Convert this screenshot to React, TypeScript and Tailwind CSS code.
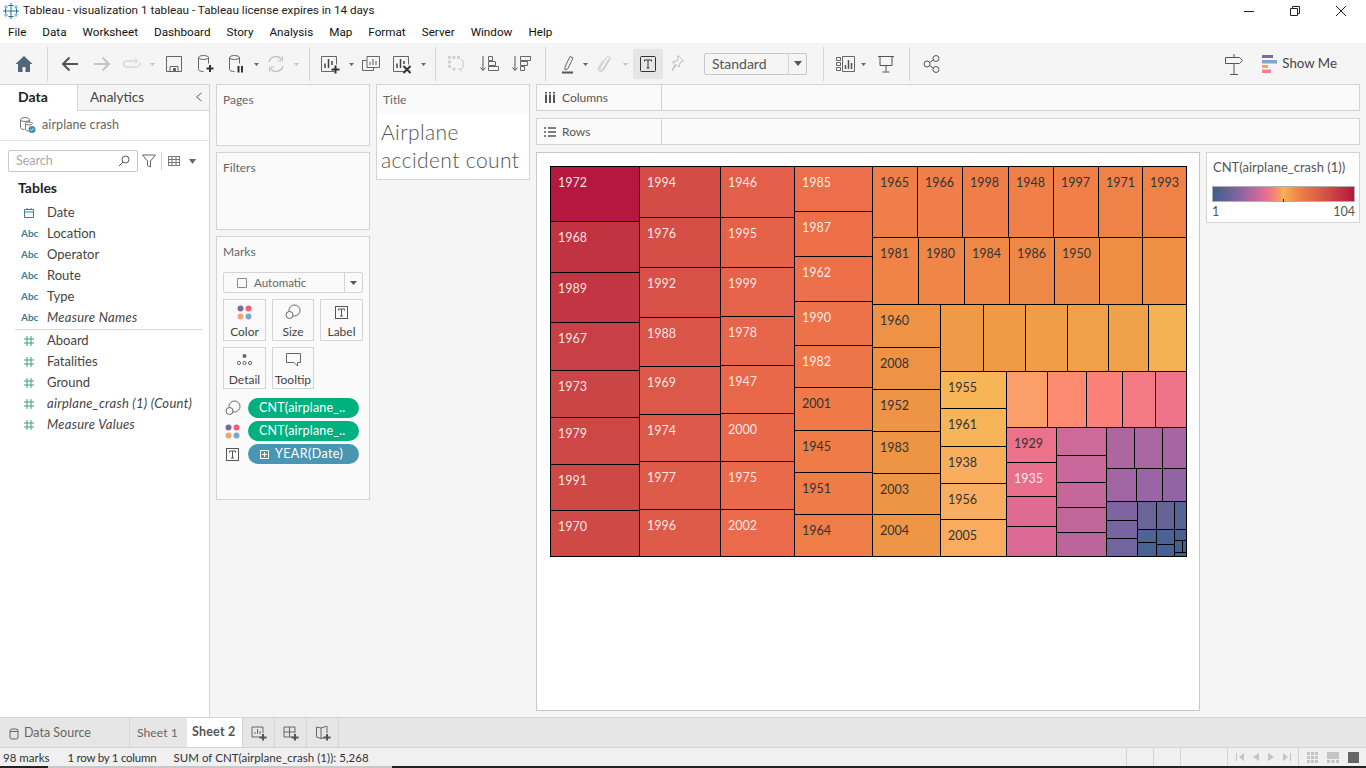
import React from 'react';

type Cell = { x0: number; y0: number; x1: number; y1: number; color: string; label?: string; dark?: boolean };
type Item = [string, string?, boolean?];

// stack cells downward inside one column
const stackV = (x0: number, x1: number, ys: number[], items: Item[]): Cell[] =>
  items.map((it, i) => ({ x0, x1, y0: ys[i], y1: ys[i + 1], color: it[0], label: it[1], dark: it[2] }));

// stack cells sideways inside one row
const stackH = (y0: number, y1: number, xs: number[], items: Item[]): Cell[] =>
  items.map((it, i) => ({ y0, y1, x0: xs[i], x1: xs[i + 1], color: it[0], label: it[1], dark: it[2] }));

const cells: Cell[] = [
  ...stackV(550.5, 639.5, [166.5, 221.5, 272.5, 322.5, 370.5, 417.5, 464.5, 510.5, 556.5], [
    ['#b5173f', '1972'], ['#c23342', '1968'], ['#c33542', '1989'], ['#c83f45', '1967'],
    ['#cc4546', '1973'], ['#cd4746', '1979'], ['#ce4846', '1991'], ['#cf4946', '1970'],
  ]),
  ...stackV(639.5, 720.5, [166.5, 217.5, 267.5, 317.5, 366.5, 414.5, 461.5, 509.5, 556.5], [
    ['#d34c46', '1994'], ['#d64f47', '1976'], ['#d85148', '1992'], ['#da5448', '1988'],
    ['#dc5849', '1969'], ['#dd5949', '1974'], ['#df5b49', '1977'], ['#df5b49', '1996'],
  ]),
  ...stackV(720.5, 794.5, [166.5, 217.5, 267.5, 316.5, 365.5, 413.5, 461.5, 509.5, 556.5], [
    ['#e35f4a', '1946'], ['#e4614a', '1995'], ['#e5634a', '1999'], ['#e7654a', '1978'],
    ['#e9684a', '1947'], ['#e9684a', '2000'], ['#ea694b', '1975'], ['#ea6a4b', '2002'],
  ]),
  ...stackV(794.5, 872.5, [166.5, 211.5, 256.5, 301.5, 345.5, 387.5, 430.5, 472.5, 514.5, 556.5], [
    ['#ec6e4a', '1985'], ['#ec6f4a', '1987'], ['#ed704a', '1962'], ['#ed724a', '1990'], ['#ee7548', '1982'],
    ['#ef7a47', '2001', true], ['#ef7c47', '1945', true], ['#ef7c47', '1951', true], ['#ef7d47', '1964', true],
  ]),
  ...stackH(166.5, 237.5, [872.5, 917.5, 962.5, 1008.5, 1053.5, 1098.5, 1142.5, 1186.5], [
    ['#f07e48', '1965', true], ['#f07e48', '1966', true], ['#f07e48', '1998', true], ['#f08048', '1948', true],
    ['#f08048', '1997', true], ['#ef8247', '1971', true], ['#ef8347', '1993', true],
  ]),
  ...stackH(237.5, 304.5, [872.5, 918.5, 964.5, 1009.5, 1054.5, 1099.5, 1142.5, 1186.5], [
    ['#ef8446', '1981', true], ['#ef8546', '1980', true], ['#ef8746', '1984', true], ['#ee8846', '1986', true],
    ['#ee8a46', '1950', true], ['#ee8e45'], ['#ee9045'],
  ]),
  ...stackV(872.5, 940.5, [304.5, 347.5, 389.5, 431.5, 473.5, 514.5, 556.5], [
    ['#ee9345', '1960', true], ['#ee9345', '2008', true], ['#ee9445', '1952', true],
    ['#ee9445', '1983', true], ['#ee9545', '2003', true], ['#ee9645', '2004', true],
  ]),
  ...stackH(304.5, 371.5, [940.5, 983.5, 1025.5, 1067.5, 1108.5, 1148.5, 1186.5], [
    ['#ef9a46'], ['#ef9b46'], ['#ef9d46'], ['#f0a048'], ['#f0a24a'], ['#f5b253'],
  ]),
  ...stackV(940.5, 1006.5, [371.5, 408.5, 446.5, 483.5, 519.5, 556.5], [
    ['#f7b556', '1955', true], ['#f7b458', '1961', true], ['#f9ae5e', '1938', true],
    ['#f9ad60', '1956', true], ['#f9ac60', '2005', true],
  ]),
  ...stackH(371.5, 427.5, [1006.5, 1047.5, 1086.5, 1122.5, 1155.5, 1186.5], [
    ['#fc9e6a'], ['#fd8b72'], ['#fb8079'], ['#f37a82'], ['#ef7389'],
  ]),
  ...stackV(1006.5, 1056.5, [427.5, 462.5, 496.5, 526.5, 556.5], [
    ['#ec718a', '1929', true], ['#ea6f8c', '1935'], ['#dd6b92'], ['#da6a95'],
  ]),
  ...stackV(1056.5, 1106.5, [427.5, 455.5, 482.5, 507.5, 532.5, 556.5], [
    ['#ce6a9a'], ['#c9699b'], ['#c4679a'], ['#c0669a'], ['#bb659b'],
  ]),
  ...stackH(427.5, 468.5, [1106.5, 1134.5, 1162.5, 1186.5], [['#ad66a0'], ['#a966a1'], ['#a566a3']]),
  ...stackH(468.5, 501.5, [1106.5, 1136.5, 1162.5, 1186.5], [['#a165a3'], ['#9a65a4'], ['#9165a4']]),
  ...stackV(1106.5, 1137.5, [501.5, 520.5, 538.5, 556.5], [['#7e65a2'], ['#7864a0'], ['#72649e']]),
  ...stackV(1137.5, 1156.5, [501.5, 529.5, 542.5, 556.5], [['#6a6499'], ['#4e6494'], ['#486392']]),
  ...stackV(1156.5, 1174.5, [501.5, 529.5, 544.5, 556.5], [['#666497'], ['#4a6393'], ['#456292']]),
  ...stackV(1174.5, 1186.5, [501.5, 529.5, 540.5, 552.5, 556.5], [['#556496'], ['#446292'], ['#416191'], ['#3e6090']]),
  { x0: 1182.5, x1: 1186.5, y0: 540.5, y1: 552.5, color: '#3e6090' },
];

const fields: { kind: string; name: string; italic?: boolean }[] = [
  { kind: 'date', name: 'Date' },
  { kind: 'abc', name: 'Location' },
  { kind: 'abc', name: 'Operator' },
  { kind: 'abc', name: 'Route' },
  { kind: 'abc', name: 'Type' },
  { kind: 'abc', name: 'Measure Names', italic: true },
  { kind: 'line', name: '' },
  { kind: 'num', name: 'Aboard' },
  { kind: 'num', name: 'Fatalities' },
  { kind: 'num', name: 'Ground' },
  { kind: 'num', name: 'airplane_crash (1) (Count)', italic: true },
  { kind: 'num', name: 'Measure Values', italic: true },
];

const Ico: React.FC<{ ml: string; children: React.ReactNode; size?: number }> = ({ ml, children, size = 20 }) => (
  <svg className={`${ml} shrink-0`} width={size} height={20} viewBox={`0 0 ${size} 20`} fill="none" strokeWidth="1" stroke="#666">
    {children}
  </svg>
);

const Caret: React.FC<{ ml: string; dim?: boolean }> = ({ ml, dim }) => (
  <svg className={`${ml} shrink-0`} width="7" height="20" viewBox="0 0 7 20">
    <path d="M1 9h5l-2.5 3z" fill={dim ? '#c4c4c4' : '#666'} />
  </svg>
);

const Sep: React.FC<{ ml: string }> = ({ ml }) => <div className={`${ml} w-px h-[34px] bg-[#d4d4d4] shrink-0`} />;

const SizeGlyph = () => (
  <svg width="16" height="16" viewBox="0 0 16 16" fill="none" stroke="#666">
    <circle cx="9.5" cy="6.5" r="5.5" />
    <circle cx="4.5" cy="11" r="3.5" fill="#fff" />
  </svg>
);

const ColorGlyph = () => (
  <svg width="15" height="15" viewBox="0 0 15 15">
    <circle cx="3.5" cy="3.5" r="3" fill="#7d6a97" />
    <circle cx="11.5" cy="3.5" r="3" fill="#ef5f78" />
    <circle cx="3.5" cy="11.5" r="3" fill="#f2a373" />
    <circle cx="11.5" cy="11.5" r="3" fill="#7fa6cf" />
  </svg>
);

const LabelGlyph = () => (
  <svg width="13" height="13" viewBox="0 0 13 13" fill="none" stroke="#555">
    <rect x="0.5" y="0.5" width="12" height="12" />
    <path d="M3.5 4.500V3h6v1.500M6.500 3v7M5 10h3" />
  </svg>
);

const MarkBtn: React.FC<{ label: string; w: string; children: React.ReactNode }> = ({ label, w, children }) => (
  <div className={`${w} h-[42px] border border-[#d4d4d4] bg-[#fafafa] flex flex-col items-center shrink-0`}>
    <div className="h-[22px] flex items-center justify-center mt-[1px]">{children}</div>
    <span className="text-[12px] leading-[14px] text-[#444] mt-[2px]">{label}</span>
  </div>
);

const Card: React.FC<{ title: string; h: string; children?: React.ReactNode }> = ({ title, h, children }) => (
  <div className={`${h} border border-[#d4d4d4] bg-[#fafafa] shrink-0`}>
    <div className="pl-[6px] pt-[7px] text-[12px] leading-[16px] text-[#666]">{title}</div>
    {children}
  </div>
);

const Pill: React.FC<{ blue?: boolean; glyph: React.ReactNode; children: React.ReactNode }> = ({ blue, glyph, children }) => (
  <div className="flex items-center h-[20px] mb-[3px]">
    <div className="w-[31px] flex justify-center">{glyph}</div>
    <div className={`w-[111px] h-[20px] rounded-full flex items-center text-white text-[12.5px] tracking-[0.2px] ${blue ? 'bg-[#4996b2]' : 'bg-[#00b180]'}`}>
      {children}
    </div>
  </div>
);

const Shelf: React.FC<{ label: string; icon: React.ReactNode }> = ({ label, icon }) => (
  <div className="h-[27px] border border-[#d4d4d4] bg-[#fafafa] flex items-center">
    <div className="w-[125px] h-full border-r border-[#d4d4d4] flex items-center text-[12px] text-[#555]">
      <div className="w-[25px] flex justify-center">{icon}</div>
      {label}
    </div>
  </div>
);

const Treemap = () => (
  <svg width="638" height="392" viewBox="550 166 638 392" className="block" shapeRendering="crispEdges">
    {cells.map((c, i) => (
      <rect key={i} x={c.x0} y={c.y0} width={c.x1 - c.x0} height={c.y1 - c.y0} fill={c.color} stroke="#000" strokeWidth="1" />
    ))}
    {cells.filter((c) => c.label).map((c) => (
      <text
        key={c.label}
        x={c.x0 + 7.5}
        y={c.y0 + 20.7}
        fontSize="12.5"
        fill={c.dark ? '#333' : '#fff'}
        fillOpacity={c.dark ? 1 : 0.88}
        shapeRendering="auto"
      >
        {c.label}
      </text>
    ))}
  </svg>
);

export default function App() {
  return (
    <div className="w-[1366px] h-[768px] overflow-hidden flex flex-col bg-white [font-family:Lato,sans-serif]">
      {/* window title */}
      <div className="h-[22px] flex items-center shrink-0 [font-family:Roboto,sans-serif]">
        <svg className="ml-[2px] mr-[3px]" width="18" height="18" viewBox="0 0 18 18" fill="none" stroke="#2f7ea6" strokeWidth="1">
          <path d="M9 1v16M1 9h16" stroke="#1f6f9c" />
          <path d="M6.500 3.500h5M6.500 14.500h5M3.500 6.500v5M14.500 6.500v5" stroke="#1f6f9c" />
          <path d="M4 3v4M2 5h4M14 3v4M12 5h4M4 11v4M2 13h4M14 11v4M12 13h4" stroke="#7aa7bf" />
        </svg>
        <span className="text-[11.7px] text-[#222]">Tableau - visualization 1 tableau - Tableau license expires in 14 days</span>
        <div className="ml-auto flex items-center">
          <svg width="12" height="12" viewBox="0 0 12 12" stroke="#222" className="mr-[34px]"><path d="M1 6.5h10" /></svg>
          <svg width="12" height="12" viewBox="0 0 12 12" stroke="#222" fill="none" className="mr-[34px]"><path d="M1.5 3.5h7v7h-7zM3.5 3.5v-2h7v7h-2" /></svg>
          <svg width="12" height="12" viewBox="0 0 12 12" stroke="#222" className="mr-[19px]"><path d="M1 1l10 10M11 1L1 11" /></svg>
        </div>
      </div>

      {/* menu */}
      <div className="h-[21px] flex items-center shrink-0 pl-[8px] gap-[16px] text-[11.7px] text-[#111] [font-family:Roboto,sans-serif]">
        <span>File</span><span>Data</span><span>Worksheet</span><span>Dashboard</span><span>Story</span><span>Analysis</span>
        <span>Map</span><span>Format</span><span>Server</span><span>Window</span><span>Help</span>
      </div>

      {/* toolbar */}
      <div className="h-[41px] bg-[#f5f5f5] flex items-center shrink-0">
        <Ico ml="ml-[14px]">
          <path d="M10 2L1.5 10H4v8h4.5v-5h3v5H16v-8h2.5z" fill="#50667a" stroke="none" />
        </Ico>
        <Sep ml="ml-[13px]" />
        <Ico ml="ml-[12px]">
          <path d="M18 10H3M9.5 3.5L3 10l6.5 6.5" stroke="#555" strokeWidth="2" />
        </Ico>
        <Ico ml="ml-[12px]">
          <path d="M2 10h15M10.500 3.500L17 10l-6.500 6.500" stroke="#c4c4c4" strokeWidth="2" />
        </Ico>
        <Ico ml="ml-[10px]">
          <path d="M14 7H4.500a3 3 0 000 6H15a3 3 0 002.500-4.500M13 4.500L15.500 7 13 9.500" stroke="#c8c8c8" />
        </Ico>
        <Caret ml="ml-[7px]" dim />
        <Ico ml="ml-[8px]">
          <path d="M2.500 2.500h15v15h-15zM6 17.500v-5h8v5" stroke="#666" />
          <path d="M9 14h3v3.500H9z" fill="#666" stroke="none" />
        </Ico>
        <Ico ml="ml-[11px]">
          <ellipse cx="8.500" cy="3.500" rx="5" ry="2" stroke="#666" />
          <path d="M3.500 3.500v12c0 1 2 2 5 2M13.500 3.500v6" stroke="#666" />
          <path d="M15 11v7M11.500 14.500h7" stroke="#333" strokeWidth="2" />
        </Ico>
        <Ico ml="ml-[11px]">
          <ellipse cx="8.500" cy="3.500" rx="5" ry="2" stroke="#666" />
          <path d="M3.500 3.500v12c0 1 2 2 5 2M13.500 3.500v6" stroke="#666" />
          <path d="M12.500 12v6.500M16 12v6.500" stroke="#333" strokeWidth="2" />
        </Ico>
        <Caret ml="ml-[7px]" />
        <Ico ml="ml-[6px]">
          <path d="M3 8a7 7 0 0112.500-2.500M17 12a7 7 0 01-12.500 2.500" stroke="#c4c4c4" strokeWidth="1.500" />
          <path d="M16.500 2v5h-5M3.500 18v-5h5" stroke="#c4c4c4" />
        </Ico>
        <Caret ml="ml-[7px]" dim />
        <Sep ml="ml-[9px]" />
        <Ico ml="ml-[10px]">
          <path d="M14 17.500H1.500v-15h15v8" stroke="#666" />
          <path d="M5 14V9.500M8.500 14V5M12 11V7" stroke="#444" strokeWidth="1.500" />
          <path d="M15.500 11.500v8M11.500 15.500h8" stroke="#333" strokeWidth="2" />
        </Ico>
        <Caret ml="ml-[8px]" />
        <Ico ml="ml-[6px]">
          <path d="M5.500 6.500h-4v10h11v-3" stroke="#666" />
          <path d="M6 2.500h12.500v11H6z" stroke="#666" />
          <path d="M9 11V8M12 11V5M15 11V7" stroke="#555" />
        </Ico>
        <Ico ml="ml-[11px]">
          <path d="M12 17.500H1.500v-15h15v8" stroke="#666" />
          <path d="M5 14V9.500M8.500 14V5M12 10V7" stroke="#444" strokeWidth="1.500" />
          <path d="M11.500 12l7 7M18.500 12l-7 7" stroke="#333" strokeWidth="2" />
        </Ico>
        <Caret ml="ml-[8px]" />
        <Sep ml="ml-[8px]" />
        <Ico ml="ml-[10px]">
          <path d="M2.500 2.500h2v2h-2zM7 2.500h2v2H7zM11.500 2.500h2v2h-2zM2.500 7h2v2h-2zM2.500 11.500h2v2h-2zM7 14h2v2H7z" stroke="#c8c8c8" />
          <path d="M17 7v6.500l-3 2.500M12.500 14l1.500 2 1.500 1.500M15 5l2 2" stroke="#c4c4c4" />
        </Ico>
        <Ico ml="ml-[13px]">
          <path d="M4 2v14M1.500 13.500L4 16.500l2.500-3" stroke="#555" />
          <path d="M9.500 2.500h4v4h-4zM9.500 7.500h7v4h-7zM9.500 12.500h10v4h-10z" stroke="#666" />
        </Ico>
        <Ico ml="ml-[12px]">
          <path d="M4 2v14M1.500 13.500L4 16.500l2.500-3" stroke="#555" />
          <path d="M9.500 2.500h10v4h-10zM9.500 7.500h7v4h-7zM9.500 12.500h4v4h-4z" stroke="#666" />
        </Ico>
        <Sep ml="ml-[14px]" />
        <Ico ml="ml-[13px]">
          <path d="M6 13L11 2.500l3 1.500-5 10.500-3 1.500z" stroke="#666" />
          <path d="M3 18.500h11" stroke="#555" strokeWidth="2" />
        </Ico>
        <Caret ml="ml-[3px]" />
        <Ico ml="ml-[6px]">
          <path d="M14 5l-6 10c-1 2-4 1-3-1l6.500-10.500c1.500-2 4.500-.5 3.500 1.500L8.500 16c-2 3-6.500 1-5-2l4.500-8" stroke="#c4c4c4" />
        </Ico>
        <Caret ml="ml-[7px]" dim />
        <div className="ml-[4px] w-[30px] h-[30px] bg-[#e6e6e6] flex items-center justify-center shrink-0">
          <svg width="16" height="16" viewBox="0 0 16 16" fill="none" stroke="#333">
            <rect x="0.500" y="0.500" width="15" height="15" rx="1" />
            <path d="M4.500 5.500v-1.500h7v1.500M8 4v8M6.500 12h3" />
          </svg>
        </div>
        <Ico ml="ml-[4px]">
          <path d="M11 1.500l5.500 5.500-3 1-1.500 5-2.500-2.500L5 17l3-6.500L5.500 8l5-1.500z" stroke="#bdbdbd" />
        </Ico>
        <div className="ml-[17px] w-[103px] h-[22px] border border-[#c8c8c8] rounded-[2px] flex items-center shrink-0">
          <span className="flex-1 pl-[7px] text-[14px] text-[#555]">Standard</span>
          <div className="w-[18px] h-full border-l border-[#d4d4d4] flex items-center justify-center">
            <svg width="8" height="5" viewBox="0 0 8 5"><path d="M0 0h8L4 5z" fill="#555" /></svg>
          </div>
        </div>
        <Sep ml="ml-[16px]" />
        <Ico ml="ml-[11px]">
          <path d="M1.500 3.500h4v3h-4zM1.500 8.500h4v3h-4zM1.500 13.500h4v3h-4zM7.500 2.500h12v15h-12z" stroke="#666" />
          <path d="M10.500 15v-4M13.500 15V6M16.500 15V9" stroke="#555" strokeWidth="1.500" />
        </Ico>
        <Caret ml="ml-[5px]" />
        <Ico ml="ml-[9px]">
          <path d="M2 2.500h16M4 2.500v9h12v-9M10 11.500v6M6.500 18h7" stroke="#555" />
        </Ico>
        <Sep ml="ml-[13px]" />
        <Ico ml="ml-[12px]">
          <circle cx="5" cy="10" r="3" stroke="#555" />
          <circle cx="14" cy="4.500" r="3" stroke="#555" />
          <circle cx="14" cy="15.500" r="3" stroke="#555" />
          <path d="M7.500 8.500l4-2.500M7.500 11.500l4 2.500" stroke="#555" />
        </Ico>
        <div className="ml-auto flex items-center pr-[29px]">
          <svg width="20" height="22" viewBox="0 0 20 22" fill="none" stroke="#555">
            <path d="M10 1v3M10 10v11M6 21.500h8M1.500 4.500h14l3 3-3 3h-14z" />
          </svg>
          <svg className="ml-[18px]" width="16" height="18" viewBox="0 0 16 18">
            <rect x="0" y="0" width="11" height="3" fill="#7d6a97" />
            <rect x="0" y="5" width="15" height="3.500" fill="#7fa6cf" />
            <rect x="0" y="10" width="6" height="3" fill="#f2a373" />
            <rect x="0" y="14.500" width="9" height="3.500" fill="#fb8088" />
          </svg>
          <span className="ml-[4px] text-[13.3px] text-[#444]">Show Me</span>
        </div>
      </div>

      {/* main area */}
      <div className="h-[633px] flex shrink-0 bg-[#f5f5f5]">
        {/* data pane */}
        <div className="w-[210px] bg-white border-r border-[#d4d4d4] shrink-0 border-t">
          <div className="h-[26px] flex">
            <div className="w-[77px] pl-[18px] pb-[3px] flex items-center text-[14px] font-bold text-[#222]">Data</div>
            <div className="flex-1 bg-[#f5f5f5] border-l border-b border-[#d4d4d4] pl-[12px] pb-[1px] flex items-center text-[13.5px] text-[#444]">
              Analytics
              <svg className="ml-auto mr-[6px]" width="8" height="10" viewBox="0 0 8 10" fill="none" stroke="#666"><path d="M6.500 1L1.500 5l5 4" /></svg>
            </div>
          </div>
          <div className="h-[30px] border-b border-[#e6e6e6] pb-[1px] flex items-center pl-[19px]">
            <svg width="18" height="18" viewBox="0 0 18 18" fill="none" stroke="#777">
              <ellipse cx="6" cy="3.500" rx="4.500" ry="2" />
              <path d="M1.500 3.500v8c0 1 2 2 4 2M10.500 3.500v3" />
              <ellipse cx="10" cy="7.500" rx="3.500" ry="1.500" />
              <path d="M6.500 7.500v6c0 1 1 1.500 3 1.500" />
              <circle cx="13" cy="13.500" r="3.500" fill="#3f8fb5" stroke="none" />
              <path d="M11.500 13.500l1 1 2-2" stroke="#fff" />
            </svg>
            <span className="ml-[5px] text-[12.5px] tracking-[0.1px] text-[#666]">airplane crash</span>
          </div>
          <div className="flex items-center h-[22px] mt-[9px] pl-[8px]">
            <div className="w-[130px] h-[22px] border border-[#c8c8c8] rounded-[2px] flex items-center px-[7px]">
              <span className="flex-1 text-[12.5px] text-[#aaa]">Search</span>
              <svg width="12" height="12" viewBox="0 0 12 12" fill="none" stroke="#555"><circle cx="7.500" cy="4.500" r="3.500" /><path d="M5 7l-4 4" /></svg>
            </div>
            <svg className="ml-[4px]" width="14" height="14" viewBox="0 0 14 14" fill="none" stroke="#666"><path d="M0.500 1h13L8.500 7v6l-3-1.500V7z" /></svg>
            <div className="ml-[5px] w-px h-[18px] bg-[#d4d4d4]" />
            <svg className="ml-[6px]" width="12" height="10" viewBox="0 0 12 10" stroke="#777"><path d="M0 .5h12M0 3.500h12M0 6.500h12M0 9.500h12M.5 0v10M4 0v10M8 0v10M11.500 0v10" /></svg>
            <svg className="ml-[9px]" width="7" height="5" viewBox="0 0 7 5"><path d="M0 0h7L3.500 5z" fill="#666" /></svg>
          </div>
          <div className="pl-[18px] mt-[7px] text-[14px] leading-[18px] font-bold text-[#222]">Tables</div>
          <div className="mt-[5px]">
            {fields.map((f, i) =>
              f.kind === 'line' ? (
                <div key={i} className="ml-[15px] w-[188px] h-px bg-[#d9d9d9] mt-[1px]" />
              ) : (
                <div key={i} className="h-[21px] flex items-center">
                  <div className="w-[47px] pl-[21px] shrink-0 flex items-center">
                    {f.kind === 'date' && (
                      <svg width="10" height="10" viewBox="0 0 10 10" fill="none" stroke="#3f7f9f" className="ml-[3px]"><path d="M.5 1.500h9v8h-9zM.5 4h9M3 0v2M7 0v2" /></svg>
                    )}
                    {f.kind === 'abc' && <span className="text-[10px] text-[#3b7d9c] font-bold">Abc</span>}
                    {f.kind === 'num' && (
                      <svg width="10" height="10" viewBox="0 0 10 10" stroke="#3aa179" className="ml-[3px]"><path d="M3 0v10M7 0v10M0 3h10M0 7h10" /></svg>
                    )}
                  </div>
                  <span className={`text-[13px] whitespace-nowrap text-[#444] ${f.italic ? 'italic tracking-[0.28px]' : ''}`}>{f.name}</span>
                </div>
              ),
            )}
          </div>
        </div>

        {/* cards */}
        <div className="flex-1 flex gap-[6px] pl-[6px] pr-[6px] min-w-0">
          <div className="w-[154px] flex flex-col gap-[6px] shrink-0">
            <Card title="Pages" h="h-[62px]" />
            <Card title="Filters" h="h-[78px]" />
            <Card title="Marks" h="h-[264px]">
              <div className="mx-[6px] mt-[12px] h-[21px] border border-[#d4d4d4] rounded-[2px] flex items-center">
                <div className="ml-[13px] w-[10px] h-[10px] border border-[#888] rounded-[1px]" />
                <span className="ml-[7px] flex-1 text-[11.5px] text-[#666]">Automatic</span>
                <div className="w-[18px] h-full border-l border-[#d4d4d4] flex items-center justify-center">
                  <svg width="7" height="4" viewBox="0 0 7 4"><path d="M0 0h7L3.500 4z" fill="#555" /></svg>
                </div>
              </div>
              <div className="mx-[6px] mt-[6px] flex gap-[6px]">
                <MarkBtn label="Color" w="w-[43px]"><ColorGlyph /></MarkBtn>
                <MarkBtn label="Size" w="w-[42px]"><SizeGlyph /></MarkBtn>
                <MarkBtn label="Label" w="w-[43px]"><LabelGlyph /></MarkBtn>
              </div>
              <div className="mx-[6px] mt-[6px] flex gap-[6px]">
                <MarkBtn label="Detail" w="w-[43px]">
                  <svg width="15" height="12" viewBox="0 0 15 12" fill="none" stroke="#666">
                    <circle cx="7.500" cy="2" r="2" fill="#666" stroke="none" />
                    <circle cx="2" cy="9" r="1.600" />
                    <circle cx="7.500" cy="9" r="1.600" />
                    <circle cx="13" cy="9" r="1.600" />
                  </svg>
                </MarkBtn>
                <MarkBtn label="Tooltip" w="w-[42px]">
                  <svg width="15" height="14" viewBox="0 0 15 14" fill="none" stroke="#666"><path d="M.5.500h14v9h-3v3.500l-3.500-3.500H.5z" /></svg>
                </MarkBtn>
              </div>
              <div className="mt-[9px]">
                <Pill glyph={<SizeGlyph />}><span className="pl-[11px]">CNT(airplane_..</span></Pill>
                <Pill glyph={<ColorGlyph />}><span className="pl-[11px]">CNT(airplane_..</span></Pill>
                <Pill blue glyph={<LabelGlyph />}>
                  <svg className="ml-[12px]" width="9" height="9" viewBox="0 0 9 9" fill="none" stroke="#fff"><path d="M.5.500h8v8h-8zM4.500 2v5M2 4.500h5" /></svg>
                  <span className="ml-[6px] tracking-[0.4px]">YEAR(Date)</span>
                </Pill>
              </div>
            </Card>
          </div>

          <div className="w-[154px] shrink-0">
            <div className="h-[96px] border border-[#d4d4d4] bg-[#fafafa]">
              <div className="h-[29px] pl-[6px] flex items-center text-[12px] text-[#666]">Title</div>
              <div className="bg-white pl-[4px] h-[65px] pt-[4px] text-[21px] leading-[28px] font-light text-[#555] tracking-[0.4px] whitespace-nowrap">
                Airplane<br />accident count
              </div>
            </div>
          </div>

          <div className="flex-1 flex flex-col min-w-0">
            <Shelf label="Columns" icon={
              <svg width="10" height="11" viewBox="0 0 10 11" stroke="#555" strokeWidth="2"><path d="M1 2.500V11M5 2.500V11M9 2.500V11" /><path d="M1 0v1.500M5 0v1.500M9 0v1.500" strokeWidth="2" /></svg>
            } />
            <div className="h-[7px]" />
            <Shelf label="Rows" icon={
              <svg width="12" height="10" viewBox="0 0 12 10" stroke="#555"><path d="M0 1h2M4 1h8M0 5h2M4 5h8M0 9h2M4 9h8" strokeWidth="1.500" /></svg>
            } />
            <div className="flex gap-[6px] mt-[7px]">
              <div className="w-[664px] h-[559px] bg-white border border-[#c8c8c8] pl-[13px] pt-[13px] shrink-0">
                <Treemap />
              </div>
              <div className="w-[154px] h-[71px] border border-[#d4d4d4] bg-white shrink-0 relative">
                <div className="pl-[6px] pt-[6px] text-[13px] leading-[16px] text-[#555] whitespace-nowrap">CNT(airplane_crash (1))</div>
                <div className="ml-[5px] mr-[4px] mt-[11px] h-[16px] border border-[#b0b0b0] bg-[linear-gradient(to_right,#3d5f8f,#8f65a3_20%,#d96b96_35%,#fb8377_44%,#f5b353_50%,#ee7f47_62%,#d14c45_82%,#b5173f)]" />
                <div className="absolute left-[76px] top-[46px] w-px h-[3px] bg-[#222]" />
                <div className="ml-[5px] mr-[4px] mt-[2px] flex justify-between text-[12.5px] leading-[16px] text-[#555]">
                  <span>1</span><span>104</span>
                </div>
              </div>
            </div>
          </div>
        </div>
      </div>

      {/* sheet tabs */}
      <div className="h-[30px] bg-[#e6e6e6] border-t border-[#d4d4d4] flex shrink-0 text-[12.5px] text-[#666]">
        <div className="w-[130px] flex items-center pl-[9px] pt-[2px] border-r border-[#d4d4d4]">
          <svg width="10" height="12" viewBox="0 0 10 12" fill="none" stroke="#666"><rect x="1" y="1" width="8" height="10" rx="2" /><path d="M1 3.500h8" /></svg>
          <span className="ml-[5px]">Data Source</span>
        </div>
        <div className="w-[57px] flex items-center pl-[7px] pt-[1px] text-[12.2px]">Sheet 1</div>
        <div className="w-[56px] bg-white flex items-center pl-[5px] font-bold text-[#555] tracking-[0.2px] border-r border-[#d4d4d4]">Sheet 2</div>
        {['sheet', 'dash', 'story'].map((k) => (
          <div key={k} className="w-[32px] border-r border-[#d4d4d4] flex items-center justify-center">
            <svg width="16" height="16" viewBox="0 0 16 16" fill="none" stroke="#666">
              {k === 'sheet' && <path d="M10 12H1V2h11v6M4 9V7M6.500 9V4M9 9V6" />}
              {k === 'dash' && <path d="M10 12H1V2h11v6M1 7h11M6.500 2v10" />}
              {k === 'story' && <path d="M10 12.500l-4 1V3L1.500 2v10l4.500 1.500M6 3l4.500-1.500H12V8" />}
              <path d="M12 9v6.500M8.500 12.500h7" stroke="#555" strokeWidth="2" />
            </svg>
          </div>
        ))}
      </div>

      {/* status bar */}
      <div className="h-[19px] bg-[#f0f0f0] border-t border-[#d4d4d4] flex items-center shrink-0 text-[11.5px] text-[#333]">
        <span className="ml-[3px] pt-[2px]">98 marks</span>
        <span className="ml-[18px] pt-[2px] tracking-[-0.25px]">1 row by 1 column</span>
        <span className="ml-[17px] pt-[2px] tracking-[0.05px]">SUM of CNT(airplane_crash (1)): 5,268</span>
        <div className="ml-auto flex h-full items-center">
          <div className="w-[27px] h-full border-l border-[#d4d4d4]" />
          <div className="w-[27px] h-full border-l border-[#d4d4d4]" />
          <div className="w-[47px] h-full border-l border-[#d4d4d4]" />
          <div className="w-[71px] h-full border-l border-[#d4d4d4] flex items-center justify-around px-[3px]">
            <svg width="8" height="8" viewBox="0 0 8 8" fill="#c4c4c4"><path d="M0 0h1v8H0zM8 0v8L3 4z" /></svg>
            <svg width="6" height="8" viewBox="0 0 6 8" fill="#c4c4c4"><path d="M6 0v8L0 4z" /></svg>
            <svg width="6" height="8" viewBox="0 0 6 8" fill="#c4c4c4"><path d="M0 0v8l6-4z" /></svg>
            <svg width="8" height="8" viewBox="0 0 8 8" fill="#c4c4c4"><path d="M7 0h1v8H7zM0 0v8l5-4z" /></svg>
          </div>
          <div className="w-[68px] h-full border-l border-[#d4d4d4] flex items-center pl-[8px] gap-[9px]">
            <svg width="11" height="11" viewBox="0 0 11 11" fill="#c4c4c4"><path d="M0 0h3v3H0zM4 0h3v3H4zM8 0h3v3H8zM0 4h3v3H0zM4 4h3v3H4zM8 4h3v3H8zM0 8h3v3H0zM4 8h3v3H4zM8 8h3v3H8z" /></svg>
            <svg width="12" height="11" viewBox="0 0 12 11" fill="#c4c4c4"><path d="M0 0h12v7H0zM0 8h3v3H0zM4.500 8h3v3h-3zM9 8h3v3H9z" /></svg>
            <svg width="11" height="11" viewBox="0 0 11 11" fill="#666"><path d="M0 0h11v11H0z" /></svg>
          </div>
        </div>
      </div>
      <div className="h-[2px] shrink-0 flex">
        <div className="w-[48px] bg-[#222]" />
        <div className="w-[344px] bg-[#c8c8c8]" />
        <div className="flex-1 bg-[#222]" />
      </div>
    </div>
  );
}
